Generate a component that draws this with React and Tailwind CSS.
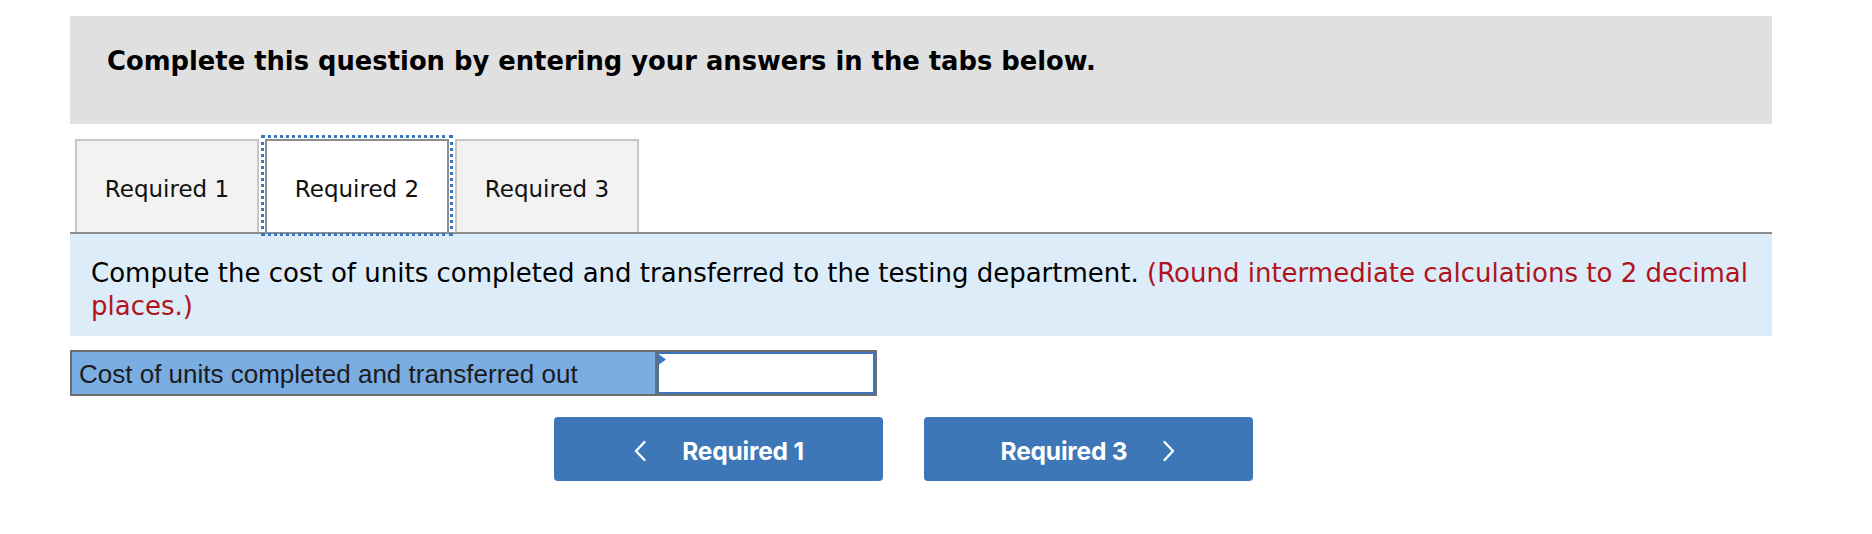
const tabs = ['Required 1', 'Required 2', 'Required 3'];

function Chevron({ dir }) {
  return (
    <svg width="14" height="22" viewBox="0 0 14 22" fill="none">
      {dir === 'left' ? (
        <polyline points="11.5,2 3,11 11.5,20" stroke="white" strokeWidth="2.4" strokeLinecap="round" strokeLinejoin="round" />
      ) : (
        <polyline points="2.5,2 11,11 2.5,20" stroke="white" strokeWidth="2.4" strokeLinecap="round" strokeLinejoin="round" />
      )}
    </svg>
  );
}

export default function App() {
  return (
    <div className="w-[1872px] h-[534px] bg-white pt-4 pl-[70px] font-['DejaVu_Sans',sans-serif]">
      <div className="w-[1702px]">
        {/* Instructions */}
        <div className="h-[108px] bg-[#e0e0e0] pl-[37px] pt-[30px]">
          <h2 className="text-[25.8px] leading-[30px] font-bold text-black">
            Complete this question by entering your answers in the tabs below.
          </h2>
        </div>

        {/* Tabs */}
        <div className="mt-[15px] flex gap-[6px] pl-[5px] border-b-2 border-[#8e8e8e]">
          {tabs.map((t, i) => (
            <div
              key={t}
              className={
                i === 1
                  ? 'relative z-10 w-[184px] h-[93px] flex items-center justify-center pt-[5px] bg-white border-2 border-b-0 border-[#8e8e8e] outline-[3px] outline-dotted outline-[#3a76c2] outline-offset-1 text-[23px] text-[#111]'
                  : 'w-[184px] h-[93px] flex items-center justify-center pt-[5px] bg-[#f2f2f2] border-2 border-b-0 border-[#c6c6c6] text-[23px] text-[#111]'
              }
            >
              {t}
            </div>
          ))}
        </div>

        {/* Question */}
        <div className="h-[102px] bg-[#dcecf8] pl-[21px] pt-[23px] text-[26px] leading-[33px] text-black">
          <span className="whitespace-nowrap">
            Compute the cost of units completed and transferred to the testing department.{' '}
            <span className="text-[#b1131c]">(Round intermediate calculations to 2 decimal</span>
          </span>
          <br />
          <span className="text-[#b1131c]">places.)</span>
        </div>

        {/* Answer row */}
        <div className="mt-[14px] w-[807px] h-[46px] flex border-2 border-[#6e6e6e]">
          <div className="w-[585px] bg-[#7aade2] border-r-2 border-[#6e6e6e] flex items-center pl-[7px] pt-[2px] font-['Liberation_Sans',Arial,sans-serif] text-[26px] text-[#1c1c1c]">
            Cost of units completed and transferred out
          </div>
          <div className="relative flex-1 bg-white border-2 border-[#3e73b6]">
            <svg className="absolute -left-[2px] -top-[1px]" width="10" height="13" viewBox="0 0 10 13">
              <polygon points="0,0 9,6.5 0,13" fill="#3e77bd" />
            </svg>
          </div>
        </div>

        {/* Navigation */}
        <div className="mt-[21px] ml-[484px] flex gap-[41px] font-['Inter',sans-serif]">
          <button className="w-[329px] h-[64px] pt-[4px] rounded-[4px] bg-[#3d77b8] flex items-center justify-center gap-[35px] text-white text-[24.5px] font-bold tracking-[-0.2px]">
            <Chevron dir="left" />
            <span>Required 1</span>
          </button>
          <button className="w-[329px] h-[64px] pt-[4px] rounded-[4px] bg-[#3d77b8] flex items-center justify-center gap-[35px] text-white text-[24.5px] font-bold tracking-[-0.2px]">
            <span>Required 3</span>
            <Chevron dir="right" />
          </button>
        </div>
      </div>
    </div>
  );
}
